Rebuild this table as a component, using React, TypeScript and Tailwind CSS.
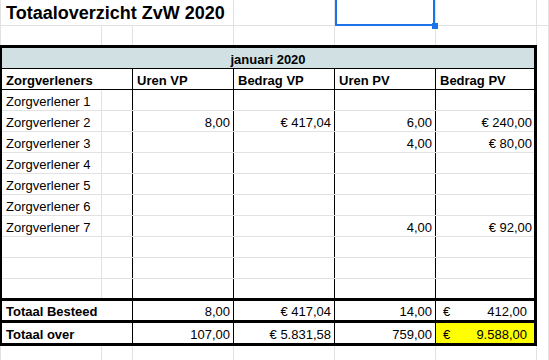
import React from "react";

const GRID = "border-[#e2e2e2]";
const FONT = { fontFamily: '"Liberation Sans", Arial, sans-serif' };

type Row = {
  name?: string;
  urenVP?: string;
  bedragVP?: string;
  urenPV?: string;
  bedragPV?: string;
};

const rows: Row[] = [
  { name: "Zorgverlener 1" },
  { name: "Zorgverlener 2", urenVP: "8,00", bedragVP: "€ 417,04", urenPV: "6,00", bedragPV: "€ 240,00" },
  { name: "Zorgverlener 3", urenPV: "4,00", bedragPV: "€ 80,00" },
  { name: "Zorgverlener 4" },
  { name: "Zorgverlener 5" },
  { name: "Zorgverlener 6" },
  { name: "Zorgverlener 7", urenPV: "4,00", bedragPV: "€ 92,00" },
  {},
  {},
  {},
];

function SheetRow({ h, last }: { h: string; last?: boolean }) {
  return (
    <div className={`flex ${h} ${last ? "" : "border-b " + GRID}`}>
      <div className={`w-[102px] border-l border-r ${GRID}`} />
      <div className={`w-[31px] border-r ${GRID}`} />
      <div className={`w-[101px] border-r ${GRID}`} />
      <div className={`w-[101px] border-r ${GRID}`} />
      <div className={`w-[101px] border-r ${GRID}`} />
      <div className={`w-[101px] border-r ${GRID}`} />
      <div className={`w-[12px] border-r ${GRID}`} />
    </div>
  );
}

function DataRow({ row, index }: { row: Row; index: number }) {
  const lastData = index === rows.length - 1;
  return (
    <div
      className={`flex items-end text-[13px] leading-[15px] ${
        lastData ? "h-[22px] border-b-[3px] border-black" : `h-[21px] border-b ${GRID}`
      }`}
    >
      <div className={`w-[100px] h-full flex items-end pb-px pl-[4px] whitespace-nowrap overflow-visible border-r ${GRID}`}>
        <span className="relative z-10 bg-white pr-px">{row.name}</span>
      </div>
      <div className="w-[31px] h-full border-r border-black" />
      <div className="w-[101px] h-full flex items-end justify-end pb-px pr-[3px] border-r border-black">{row.urenVP}</div>
      <div className="w-[101px] h-full flex items-end justify-end pb-px pr-[3px] border-r border-black">{row.bedragVP}</div>
      <div className="w-[101px] h-full flex items-end justify-end pb-px pr-[3px] border-r border-black">{row.urenPV}</div>
      <div className="w-[98px] h-full flex items-end justify-end pb-px pr-[2px]">{row.bedragPV}</div>
    </div>
  );
}

function TotalRow({
  label,
  values,
  euro,
  yellow,
  h,
}: {
  label: string;
  values: [string, string, string];
  euro: string;
  yellow?: boolean;
  h: string;
}) {
  return (
    <div className={`flex ${h} border-b-[3px] border-black text-[13px] leading-[15px]`}>
      <div className="w-[131px] flex items-end pb-px pl-[4px] font-bold border-r border-black whitespace-nowrap">
        {label}
      </div>
      <div className="w-[101px] flex items-end justify-end pb-px pr-[3px] border-r border-black">{values[0]}</div>
      <div className="w-[101px] flex items-end justify-end pb-px pr-[3px] border-r border-black">{values[1]}</div>
      <div className="w-[101px] flex items-end justify-end pb-px pr-[3px] border-r border-black">{values[2]}</div>
      <div className={`w-[98px] flex items-end justify-between pb-px pl-[7px] pr-[7px] ${yellow ? "bg-[#ffff00]" : ""}`}>
        <span>€</span>
        <span>{euro}</span>
      </div>
    </div>
  );
}

export default function App() {
  return (
    <div className="w-[549px] h-[360px] overflow-hidden bg-white text-black" style={FONT}>
      {/* title row */}
      <div className={`flex h-[26px] border-b ${GRID}`}>
        <div className={`w-[234px] flex items-end pb-px pl-[5px] border-l border-r ${GRID}`}>
          <h1 className="text-[18px] leading-[21px] font-bold whitespace-nowrap">Totaaloverzicht ZvW 2020</h1>
        </div>
        <div className={`w-[101px] border-r ${GRID}`} />
        <div className={`relative w-[101px] border-r ${GRID}`}>
          <div className="absolute left-0 right-0 top-[-4px] bottom-[-1px] border-2 border-[#1a73e8]">
            <div className="absolute right-[-5px] bottom-[-5px] w-[6px] h-[6px] bg-[#1a73e8]" />
          </div>
        </div>
        <div className={`w-[101px] border-r ${GRID}`} />
        <div className={`w-[12px] border-r ${GRID}`} />
      </div>

      <SheetRow h="h-[19px]" last />

      {/* table */}
      <div className="flex">
        <div className="w-[537px] border-t-[3px] border-l-2 border-r-[3px] border-black">
          <div className="flex h-[21px] items-end justify-center pb-px bg-[#d0e0e3] border-b border-black text-[13px] leading-[15px] font-bold">
            januari 2020
          </div>
          <div className="flex h-[21px] border-b border-black text-[13px] leading-[15px] font-bold">
            <div className="w-[131px] flex items-end pb-px pl-[4px] border-r border-black">Zorgverleners</div>
            <div className="w-[101px] flex items-end pb-px pl-[4px] border-r border-black">Uren VP</div>
            <div className="w-[101px] flex items-end pb-px pl-[4px] border-r border-black">Bedrag VP</div>
            <div className="w-[101px] flex items-end pb-px pl-[4px] border-r border-black">Uren PV</div>
            <div className="w-[98px] flex items-end pb-px pl-[4px]">Bedrag PV</div>
          </div>
          {rows.map((r, i) => (
            <DataRow key={i} row={r} index={i} />
          ))}
          <TotalRow label="Totaal Besteed" values={["8,00", "€ 417,04", "14,00"]} euro="412,00" h="h-[22px]" />
          <TotalRow
            label="Totaal over"
            values={["107,00", "€ 5.831,58", "759,00"]}
            euro="9.588,00"
            yellow
            h="h-[23px]"
          />
        </div>
        <div className="w-[12px] border-r border-[#e2e2e2]" />
      </div>

      <SheetRow h="h-[20px]" last />
    </div>
  );
}
